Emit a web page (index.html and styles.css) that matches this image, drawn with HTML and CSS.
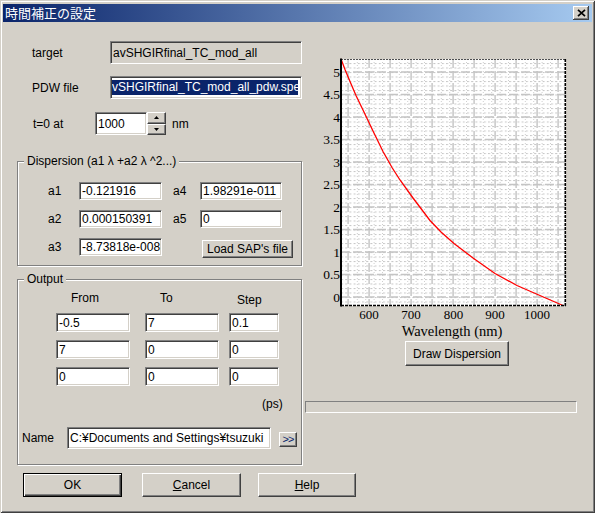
FILE: index.html
```html
<!DOCTYPE html>
<html lang="ja">
<head>
<meta charset="utf-8">
<title>時間補正の設定</title>
<link rel="stylesheet" href="styles.css">
</head>
<body>
<div class="window">
  <div class="titlebar">
    <span class="title">時間補正の設定</span>
    <div class="close"><svg width="9" height="8" viewBox="0 0 9 8"><path d="M1 0.8 L8 7.2 M8 0.8 L1 7.2" stroke="#000" stroke-width="1.7" fill="none"/></svg></div>
  </div>
  <div class="main">
    <div class="left">
      <div class="row row1"><span class="lbl-wide">target</span><div class="edit readonly w192">avSHGIRfinal_TC_mod_all</div></div>
      <div class="row row2"><span class="lbl-wide">PDW file</span><div class="edit w192 sel-wrap"><span class="sel">vSHGIRfinal_TC_mod_all_pdw.spe</span></div></div>
      <div class="row row3"><span class="lbl-t0">t=0 at</span><div class="edit w52">1000</div>
        <div class="spin">
          <div class="spin-btn"><svg width="5" height="3" viewBox="0 0 5 3"><polygon points="2.5,0 5,3 0,3" fill="#000"/></svg></div>
          <div class="spin-btn"><svg width="5" height="3" viewBox="0 0 5 3"><polygon points="0,0 5,0 2.5,3" fill="#000"/></svg></div>
        </div>
        <span class="nm">nm</span>
      </div>

      <fieldset class="group disp">
        <legend>Dispersion (a1 λ +a2 λ ^2...)</legend>
        <div class="disp-grid">
          <span>a1</span><div class="edit small w83">-0.121916</div><span>a4</span><div class="edit small w82">1.98291e-011</div>
          <span>a2</span><div class="edit small w83">0.000150391</div><span>a5</span><div class="edit small w82">0</div>
          <span>a3</span><div class="edit small w83">-8.73818e-008</div><span></span><button class="btn load">Load SAP's file</button>
        </div>
      </fieldset>

      <fieldset class="group out">
        <legend>Output</legend>
        <div class="out-grid">
          <span class="h h1">From</span><span class="h h2">To</span><span class="h h3">Step</span>
          <div class="edit cell w74">-0.5</div><div class="edit cell w74">7</div><div class="edit cell w50">0.1</div>
          <div class="edit cell w74">7</div><div class="edit cell w74">0</div><div class="edit cell w50">0</div>
          <div class="edit cell w74">0</div><div class="edit cell w74">0</div><div class="edit cell w50">0</div>
        </div>
        <div class="ps">(ps)</div>
        <div class="name-row">
          <span class="lbl-name">Name</span>
          <div class="edit w204">C:¥Documents and Settings¥tsuzuki</div>
          <button class="btn more">&gt;&gt;</button>
        </div>
      </fieldset>
    </div>

    <div class="right">
      <svg class="chart" width="277" height="290" viewBox="303 50 277 290">
        <defs>
          <pattern id="dash" patternUnits="userSpaceOnUse" x="341" y="297" width="4.2" height="4.5">
            <rect x="0" y="0" width="2" height="1" fill="#c6c6c6"/>
          </pattern>
        </defs>
        <rect x="341" y="59" width="225" height="247" fill="#fff"/>
        <rect x="341" y="59" width="225" height="247" fill="url(#dash)"/>
        <path d="M357.3 59V306 M365.7 59V306 M374.1 59V306 M382.5 59V306 M399.3 59V306 M407.7 59V306 M416.1 59V306 M424.5 59V306 M441.3 59V306 M449.7 59V306 M458.1 59V306 M466.5 59V306 M483.3 59V306 M491.7 59V306 M500.1 59V306 M508.5 59V306 M525.3 59V306 M533.7 59V306 M542.1 59V306 M550.5 59V306" stroke="#cfcfcf" stroke-width="1" stroke-dasharray="1 2" fill="none"/>
        <path d="M348.1 59V306 M369.1 59V306 M390.1 59V306 M411.1 59V306 M432.1 59V306 M453.1 59V306 M474.1 59V306 M495.1 59V306 M516.1 59V306 M537.1 59V306 M558.1 59V306" stroke="#c4c4c4" stroke-width="1.4" stroke-dasharray="9 3" fill="none"/>
        <path d="M341 297H566 M341 274.5H566 M341 252H566 M341 229.5H566 M341 207H566 M341 184.5H566 M341 162H566 M341 139.5H566 M341 117H566 M341 94.5H566 M341 72H566" stroke="#c4c4c4" stroke-width="1.4" stroke-dasharray="9 3" fill="none"/>
        <polyline points="341,59 345,69.5 350,81.5 356,95.5 363,110 373,131 383,151.5 392,167.5 400,180 413,198 430,220.5 441,232 454,243.5 473,258 495,273.5 517,285.5 533,292.5 548,299 563,305.5" stroke="#ff0000" stroke-width="1.3" fill="none"/>
        <line x1="341" y1="59.5" x2="566" y2="59.5" stroke="#505050" stroke-width="1.2" stroke-dasharray="2 1"/>
        <line x1="565.3" y1="59" x2="565.3" y2="306" stroke="#000" stroke-width="1.6" stroke-dasharray="3 1"/>
        <line x1="341" y1="305.5" x2="566" y2="305.5" stroke="#000" stroke-width="1.6" stroke-dasharray="3 1"/>
        <line x1="341" y1="58.5" x2="341" y2="306.5" stroke="#000" stroke-width="2"/>
        <g class="ylab">
          <text x="340" y="301.5">0</text>
          <text x="340" y="279">0.5</text>
          <text x="340" y="256.5">1</text>
          <text x="340" y="234">1.5</text>
          <text x="340" y="211.5">2</text>
          <text x="340" y="189">2.5</text>
          <text x="340" y="166.5">3</text>
          <text x="340" y="144">3.5</text>
          <text x="340" y="121.5">4</text>
          <text x="340" y="99">4.5</text>
          <text x="340" y="76.5">5</text>
        </g>
        <g class="xlab">
          <text x="369" y="319">600</text>
          <text x="411" y="319">700</text>
          <text x="453.5" y="319">800</text>
          <text x="495" y="319">900</text>
          <text x="537" y="319">1000</text>
          <text x="452" y="335.5" class="axis-title">Wavelength (nm)</text>
        </g>
      </svg>
      <button class="btn draw">Draw Dispersion</button>
      <div class="progress"></div>
    </div>
  </div>
  <div class="buttons">
    <button class="btn big ok">OK</button>
    <button class="btn big cancel"><u>C</u>ancel</button>
    <button class="btn big help"><u>H</u>elp</button>
  </div>
</div>
</body>
</html>
```

FILE: styles.css
```css
* { box-sizing: border-box; }

body {
  margin: 0;
  background: #d4d0c8;
  font-family: "Liberation Sans", Arial, "Noto Sans CJK JP", sans-serif;
  font-size: 12px;
  color: #000;
}

.window {
  width: 595px;
  height: 513px;
  padding: 4px 3px 3px;
  background: #d4d0c8;
  box-shadow: inset 1px 1px #d4d0c8, inset -1px -1px #404040, inset 2px 2px #fff, inset -2px -2px #808080;
  overflow: hidden;
}

.titlebar {
  height: 18px;
  display: flex;
  align-items: center;
  justify-content: space-between;
  padding: 0 3px 0 2px;
  background: linear-gradient(to right, #0a246a, #a6caf0);
  color: #fff;
}

.title {
  font-family: "Noto Sans CJK JP", sans-serif;
  font-size: 13px;
  line-height: 18px;
}

.close {
  width: 16px;
  height: 14px;
  background: #d4d0c8;
  box-shadow: inset -1px -1px #404040, inset 1px 1px #fff, inset -2px -2px #808080;
  display: flex;
  align-items: center;
  justify-content: center;
}

.close svg { display: block; }

.main { display: flex; }

.left {
  width: 300px;
  padding-left: 14px;
}

.right {
  flex: 1;
  display: flex;
  flex-direction: column;
  align-items: flex-start;
}

.row {
  display: flex;
  align-items: center;
  height: 23px;
  padding-left: 15px;
}

.row1 { margin-top: 19px; }
.row2 { margin-top: 12px; }
.row3 { margin-top: 13px; padding-left: 16px; }

.lbl-wide { width: 78px; }
.lbl-t0 { width: 62px; }

.edit {
  height: 23px;
  border: 1px solid;
  border-color: #808080 #fff #fff #808080;
  box-shadow: inset 1px 1px #404040, inset -1px -1px #d4d0c8;
  background: #fff;
  padding: 0 0 0 2px;
  display: flex;
  align-items: center;
  overflow: hidden;
  white-space: nowrap;
}

.readonly { background: #d4d0c8; }

.w192 { width: 192px; }
.w52 { width: 52px; }
.w83 { width: 83px; }
.w82 { width: 82px; }
.w74 { width: 74px; }
.w50 { width: 50px; }
.w204 { width: 204px; height: 22px; }

.sel-wrap { padding-left: 1px; }

.sel {
  display: block;
  width: 186px;
  height: 15px;
  line-height: 15px;
  background: #0a246a;
  color: #fff;
  overflow: hidden;
}

.spin {
  width: 19px;
  height: 23px;
  display: flex;
  flex-direction: column;
}

.spin-btn {
  flex: 1;
  background: #d4d0c8;
  border: 1px solid;
  border-color: #fff #404040 #404040 #fff;
  box-shadow: inset -1px -1px #808080;
  display: flex;
  align-items: center;
  justify-content: center;
}

.spin-btn svg { display: block; }

.nm { margin-left: 6px; }

.group {
  margin: 0;
  padding: 0;
  min-width: 0;
  width: 285px;
  border: 1px solid #808080;
  box-shadow: inset 1px 1px #fff, 1px 1px #fff;
}

.group legend {
  margin-left: 6px;
  padding: 0 3px;
  line-height: 14px;
  background: #d4d0c8;
}

.disp { margin-top: 19px; }
.out { margin-top: 6px; }

.disp-grid {
  display: grid;
  grid-template-columns: 31px 94px 27px 82px;
  grid-auto-rows: 18px;
  row-gap: 10px;
  align-items: center;
  padding: 14px 0 9px 30px;
}

.edit.small { height: 18px; }

.btn {
  margin: 0;
  padding: 0;
  font: inherit;
  color: #000;
  background: #d4d0c8;
  border: 1px solid;
  border-color: #fff #404040 #404040 #fff;
  box-shadow: inset -1px -1px #808080;
  display: flex;
  align-items: center;
  justify-content: center;
  white-space: nowrap;
}

.load {
  width: 91px;
  height: 18px;
  margin: 2px 0 0 2px;
  align-self: start;
}

.out-grid {
  display: grid;
  grid-template-columns: 89px 84px 50px;
  grid-template-rows: 14px 19px 19px 19px;
  row-gap: 8px;
  padding: 5px 0 0 38px;
}

.h { line-height: 14px; }
.h1, .h2 { padding-left: 15px; }
.h3 { padding-left: 8px; margin-top: 2px; }

.edit.cell { height: 19px; }

.ps {
  margin-top: 11px;
  line-height: 14px;
  padding-left: 244px;
}

.name-row {
  display: flex;
  align-items: center;
  margin-top: 16px;
  padding: 0 0 15px 4px;
}

.lbl-name { width: 45px; }

.more {
  width: 18px;
  height: 15px;
  margin-left: 8px;
  margin-top: 2px;
  font-size: 11px;
  letter-spacing: -1px;
  color: #0a246a;
}

.chart {
  display: block;
  margin-top: 28px;
}

.ylab text {
  font-family: "Liberation Serif", "Times New Roman", serif;
  font-size: 13.5px;
  text-anchor: end;
}

.xlab text {
  font-family: "Liberation Serif", "Times New Roman", serif;
  font-size: 13px;
  text-anchor: middle;
}

.xlab .axis-title { font-size: 14.5px; }

.draw {
  width: 104px;
  height: 25px;
  margin: 1px 0 0 102px;
}

.progress {
  width: 272px;
  height: 12px;
  margin: 35px 0 0 2px;
  border: 1px solid;
  border-color: #808080 #fff #fff #808080;
}

.buttons {
  display: flex;
  margin-top: 8px;
  padding-left: 20px;
}

.big {
  width: 99px;
  height: 24px;
}

.cancel { margin-left: 20px; }
.help { margin-left: 17px; width: 98px; }

.ok {
  border: 1px solid #000;
  box-shadow: inset 1px 1px #fff, inset -1px -1px #404040, inset -2px -2px #808080;
}
```
